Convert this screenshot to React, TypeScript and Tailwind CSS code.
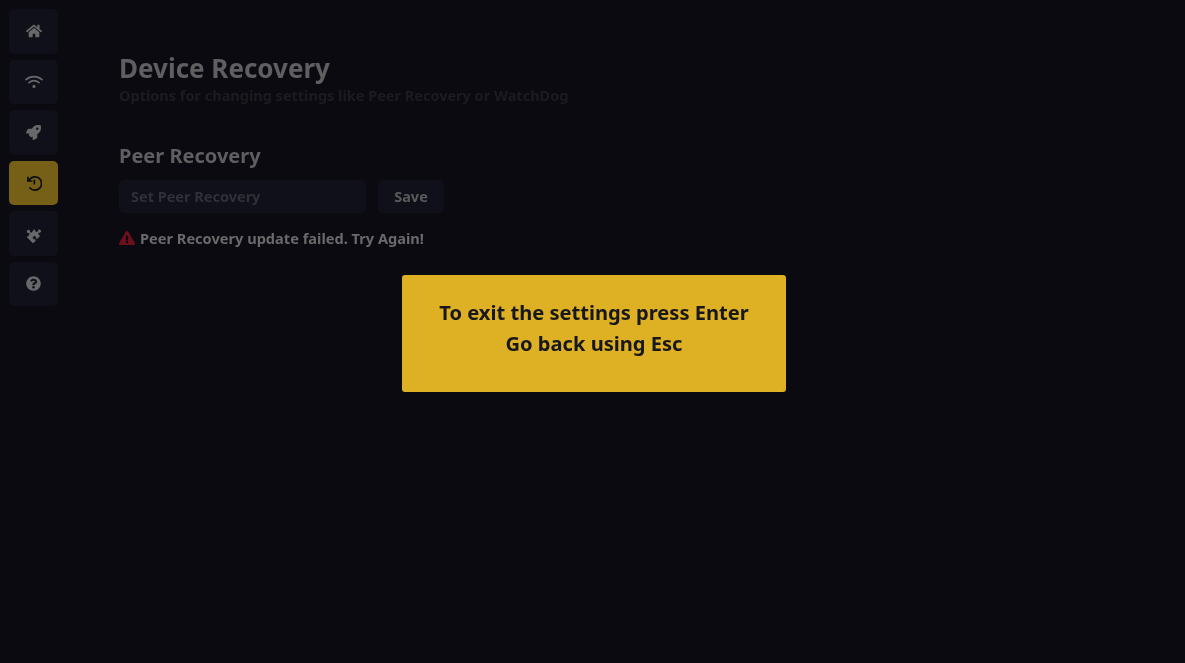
import { FaHome, FaRocket, FaPuzzlePiece, FaQuestionCircle, FaExclamationTriangle } from "react-icons/fa";
import type { ReactNode } from "react";

function WifiGlyph() {
  return (
    <svg width="18" height="14" viewBox="0 0 18 14" fill="none" stroke="currentColor" strokeWidth="1.7" strokeLinecap="round">
      <path d="M1 4.6C5.6.6 12.4.6 17 4.6" />
      <path d="M4 7.6c3-2.4 7-2.4 10 0" />
      <circle cx="9" cy="11.4" r="1.6" fill="currentColor" stroke="none" />
    </svg>
  );
}

function HistoryGlyph() {
  return (
    <svg width="16" height="16" viewBox="0 0 24 24" fill="none" stroke="currentColor" strokeWidth="2.6" strokeLinecap="round" strokeLinejoin="round">
      <path d="M6 19.5A10 10 0 1 0 5.5 6.5L3 9" />
      <path d="M3 3.5V9h5.5" />
      <path d="M12.5 8v5" />
    </svg>
  );
}

const navItems: { icon: ReactNode; active?: boolean }[] = [
  { icon: <FaHome size={16} /> },
  { icon: <WifiGlyph /> },
  { icon: <FaRocket size={15} /> },
  { icon: <HistoryGlyph />, active: true },
  { icon: <FaPuzzlePiece size={15} className="-rotate-45" /> },
  { icon: <FaQuestionCircle size={15} /> },
];

function Sidebar() {
  return (
    <nav className="flex w-[119px] shrink-0 flex-col gap-[6px] pl-[9px] pt-[9px]">
      {navItems.map(({ icon, active }, i) => (
        <div
          key={i}
          className={`flex h-[44.5px] w-[49px] items-center justify-center rounded-[5px] ${
            active ? "bg-[#766018] text-[#0c0c11]" : "bg-[#0f1019] text-[#68686a]"
          }`}
        >
          {icon}
        </div>
      ))}
    </nav>
  );
}

function RecoveryPanel() {
  return (
    <main className="flex flex-col pt-[50px]">
      <h1 className="text-[26px] leading-[36px] font-bold text-[#5f5f61]">Device Recovery</h1>
      <p className="text-[14.5px] leading-[18px] font-bold text-[#1c1c20]">
        Options for changing settings like Peer Recovery or WatchDog
      </p>
      <h2 className="mt-[38px] text-[20px] leading-[28px] font-bold text-[#5f5f61]">Peer Recovery</h2>
      <div className="mt-[10px] flex gap-[12px]">
        <div className="flex h-[33px] w-[247px] items-center rounded-[5px] bg-[#0f1019] px-[12px] text-[14.5px] font-bold text-[#2f3038]">
          Set Peer Recovery
        </div>
        <div className="flex h-[33px] w-[66px] items-center justify-center rounded-[5px] bg-[#0f1019] text-[14.5px] font-bold text-[#5a5a5c]">
          Save
        </div>
      </div>
      <div className="mt-[15px] flex items-center gap-[5px] text-[14.6px] leading-[20px] font-bold text-[#6a6a6c]">
        <FaExclamationTriangle size={16} className="text-[#6e0f1e]" />
        Peer Recovery update failed. Try Again!
      </div>
    </main>
  );
}

export default function App() {
  return (
    <div className="relative h-[663px] w-[1185px] overflow-hidden bg-[#0a0a10] font-['Noto_Sans','Open_Sans',sans-serif]">
      <div className="flex h-full blur-[0.5px]">
        <Sidebar />
        <RecoveryPanel />
      </div>
      <div className="absolute top-[275px] left-[402px] flex h-[117px] w-[384px] flex-col items-center rounded-[3px] bg-[#deb023] pt-[22px] text-[20.1px] leading-[31px] font-bold text-[#17171c] blur-[0.3px]">
        <span>To exit the settings press Enter</span>
        <span>Go back using Esc</span>
      </div>
    </div>
  );
}
